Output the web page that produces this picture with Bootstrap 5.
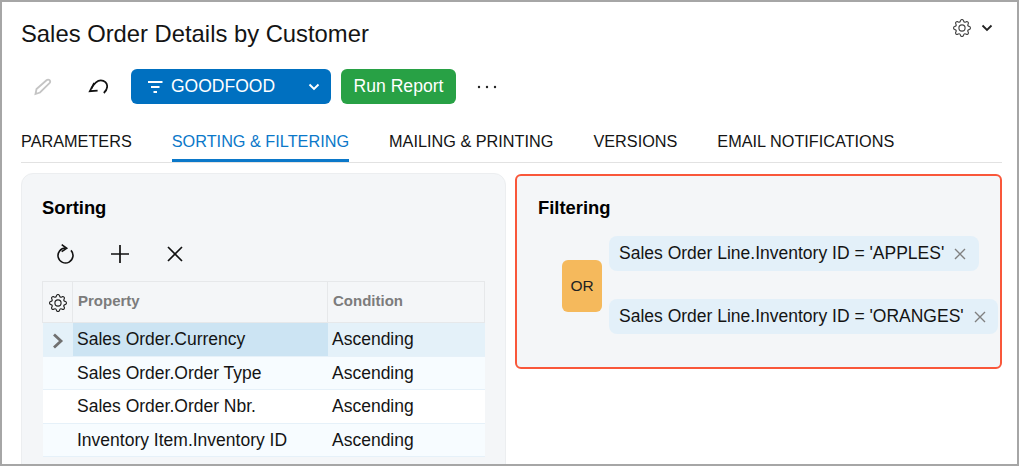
<!DOCTYPE html>
<html lang="en">
<head>
  <meta charset="UTF-8">
  <title>Sales Order Details by Customer</title>
  <link href="https://cdn.jsdelivr.net/npm/bootstrap@5.3.0/dist/css/bootstrap.min.css" rel="stylesheet">
  <style>
    html, body { height: 100%; overflow: hidden; }
    body { font-family: "Liberation Sans", Arial, sans-serif; font-size: 17.5px; color: #141414; background: #fff; }
    .frame { height: 466px; border: 2px solid #a6a6a6; padding: 0 15px 0 19px; overflow: hidden; }
    .title-row { height: 67px; }
    .page-title { font-size: 23.8px; font-weight: 400; margin: 21px 0 0; line-height: 22px; }
    .top-tools { margin: 17px 9px 0 0; gap: 10px; }
    .action-row { height: 35px; }
    .tool-btn { width: 24px; height: 24px; padding: 0; border: 0; background: none; display: flex; align-items: center; justify-content: center; color: #141414; flex: none; }
    .btn-edit { margin-left: 9px; }
    .btn-undo { margin-left: 32px; }
    .btn-template { background: #0070c0; color: #fff; border-radius: 6px; height: 35px; width: 200px; font-size: 17.5px; padding: 0 11px 0 17px; margin-left: 21px; }
    .btn-run { background: #28a145; color: #fff; border-radius: 6px; height: 35px; width: 115px; font-size: 17.6px; padding: 0; border: 0; margin-left: 10px; }
    .btn-more { margin-left: 19px; }
    .tab-row { margin-top: 17px; height: 42px; border-bottom: 1px solid #e2e2e2; gap: 40px; }
    .tab-item { color: #141414; font-size: 16.25px; line-height: 20px; padding-top: 10px; height: 41px; border-bottom: 3px solid transparent; text-decoration: none; white-space: nowrap; }
    .tab-item.on { color: #0b78c9; border-bottom-color: #0b78c9; border-radius: 2px 2px 0 0; }
    .panes { margin-top: 10px; gap: 9px; align-items: flex-start; }
    .sort-pane { width: 485px; height: 320px; background: #f4f6f8; border: 1px solid #eceef0; border-radius: 12px; padding: 23px 20px 0 20px; flex: none; }
    .filter-pane { width: 487px; height: 195px; margin-top: 1px; background: #f4f6f8; border: 2px solid #f9573a; border-radius: 6px; padding: 21px 0 0 21px; flex: none; }
    .pane-title { font-size: 18.4px; font-weight: 700; line-height: 22px; color: #000; margin: 0; }
    .sort-tools { margin: 15px 0 0 11px; height: 40px; gap: 31px; }
    .sort-grid { table-layout: fixed; width: 442px; border-collapse: collapse; margin: 7px 0 0; --bs-table-bg: transparent; }
    .sort-grid th { height: 41px; font-size: 15px; font-weight: 700; color: #7c7c7c; border: 1px solid #e6e8ea; padding: 0 5px 2px; vertical-align: middle; background: #f4f6f8; }
    .sort-grid td { height: 33.5px; padding: 0 4px 0 4.5px; border: 0; border-bottom: 1px solid #e6f1f9; vertical-align: middle; background: #fff; color: #141414; font-size: 17.5px; white-space: nowrap; }
    .sort-grid tr.row-near td { background: #f7fcff; }
    .sort-grid tr.row-active td { background: #e4f1f9; }
    .sort-grid tr.row-active td.cell-active { background: #cce4f3; }
    .filter-body { margin: 17px 0 0 24px; }
    .or-box { width: 40px; height: 52px; background: #f5b95c; border-radius: 6px; font-size: 15.5px; color: #222; flex: none; margin: 1px 7px 0 0; }
    .filter-list { gap: 28px; }
    .filter-chip { height: 35px; background: #e3f0f9; border-radius: 8px; padding: 0 12.5px 0 10px; font-size: 17.5px; gap: 10px; white-space: nowrap; width: max-content; }
    .chip-x { color: #808080; }
  </style>
</head>
<body>
  <svg width="0" height="0" class="position-absolute">
    <symbol id="gear" viewBox="0 0 16 16">
      <path fill="currentColor" d="M8 4.754a3.246 3.246 0 1 0 0 6.492 3.246 3.246 0 0 0 0-6.492zM5.754 8a2.246 2.246 0 1 1 4.492 0 2.246 2.246 0 0 1-4.492 0z"/>
      <path fill="currentColor" d="M9.796 1.343c-.527-1.79-3.065-1.79-3.592 0l-.094.319a.873.873 0 0 1-1.255.52l-.292-.16c-1.64-.892-3.433.902-2.54 2.541l.159.292a.873.873 0 0 1-.52 1.255l-.319.094c-1.79.527-1.79 3.065 0 3.592l.319.094a.873.873 0 0 1 .52 1.255l-.16.292c-.892 1.64.901 3.434 2.541 2.54l.292-.159a.873.873 0 0 1 1.255.52l.094.319c.527 1.79 3.065 1.79 3.592 0l.094-.319a.873.873 0 0 1 1.255-.52l.292.16c1.64.893 3.434-.902 2.54-2.541l-.159-.292a.873.873 0 0 1 .52-1.255l.319-.094c1.79-.527 1.79-3.065 0-3.592l-.319-.094a.873.873 0 0 1-.52-1.255l.16-.292c.893-1.64-.902-3.433-2.541-2.54l-.292.159a.873.873 0 0 1-1.255-.52l-.094-.319zm-2.633.283c.246-.835 1.428-.835 1.674 0l.094.319a1.873 1.873 0 0 0 2.693 1.115l.291-.16c.764-.415 1.6.42 1.184 1.185l-.159.292a1.873 1.873 0 0 0 1.116 2.692l.318.094c.835.246.835 1.428 0 1.674l-.319.094a1.873 1.873 0 0 0-1.115 2.693l.16.291c.415.764-.42 1.6-1.185 1.184l-.291-.159a1.873 1.873 0 0 0-2.693 1.116l-.094.318c-.246.835-1.428.835-1.674 0l-.094-.319a1.873 1.873 0 0 0-2.692-1.115l-.292.16c-.764.415-1.6-.42-1.184-1.185l.159-.291A1.873 1.873 0 0 0 1.945 8.93l-.319-.094c-.835-.246-.835-1.428 0-1.674l.319-.094A1.873 1.873 0 0 0 3.06 4.377l-.16-.292c-.415-.764.42-1.6 1.185-1.184l.292.159a1.873 1.873 0 0 0 2.692-1.115l.094-.319z"/>
    </symbol>
  </svg>

  <div class="frame">
    <div class="title-row d-flex justify-content-between align-items-start">
      <h1 class="page-title">Sales Order Details by Customer</h1>
      <div class="top-tools d-flex align-items-center">
        <svg width="18" height="18" style="color:#444"><use href="#gear"/></svg>
        <svg width="12" height="8" viewBox="0 0 12 8" fill="none" stroke="#222" stroke-width="1.8"><path d="M1.5 1.5 6 6l4.5-4.5"/></svg>
      </div>
    </div>

    <div class="action-row d-flex align-items-center">
      <button class="tool-btn btn-edit" type="button" aria-label="Edit">
        <svg width="20" height="20" viewBox="0 0 20 20" fill="none" stroke="#c4c4c4" stroke-width="1.8"><path d="M3.5 17l1-5L14.5 3.2c1-.9 2.2-.9 3 0s1 2 0 3L8 15.5z"/></svg>
      </button>
      <button class="tool-btn btn-undo" type="button" aria-label="Undo">
        <svg width="20" height="18" viewBox="0 0 20 18" fill="none" stroke="#111" stroke-width="1.7"><path d="M6.2 5 1.8 13.2l7.8-.5"/><path d="M3.4 10.5C6 5.5 9.5 2.3 12.8 2.3c3.8 0 6.4 2.8 6.4 6 0 2.8-1.6 5.2-3.4 6.7"/></svg>
      </button>
      <div class="btn-template d-flex align-items-center">
        <svg width="15" height="14" viewBox="0 0 15 14" fill="none" stroke="#fff" stroke-width="1.9" class="me-2"><path d="M0 2h14.5M3 7h8.5M5.5 12h3.5"/></svg>
        <span class="flex-grow-1">GOODFOOD</span>
        <svg width="12" height="8" viewBox="0 0 12 8" fill="none" stroke="#fff" stroke-width="1.9"><path d="M1.5 1.5 6 6l4.5-4.5"/></svg>
      </div>
      <button class="btn-run" type="button">Run Report</button>
      <button class="tool-btn btn-more" type="button" aria-label="More">
        <svg width="20" height="4" viewBox="0 0 20 4" fill="#222"><circle cx="2" cy="2" r="1.2"/><circle cx="10" cy="2" r="1.2"/><circle cx="18" cy="2" r="1.2"/></svg>
      </button>
    </div>

    <div class="tab-row d-flex">
      <a class="tab-item" href="#">PARAMETERS</a>
      <a class="tab-item on" href="#">SORTING &amp; FILTERING</a>
      <a class="tab-item" href="#">MAILING &amp; PRINTING</a>
      <a class="tab-item" href="#">VERSIONS</a>
      <a class="tab-item" href="#">EMAIL NOTIFICATIONS</a>
    </div>

    <div class="panes d-flex">
      <section class="sort-pane">
        <h2 class="pane-title">Sorting</h2>
        <div class="sort-tools d-flex align-items-center">
          <svg width="24" height="24" viewBox="0 0 24 24" fill="none" stroke="#111" stroke-width="1.6"><path d="M12.5 6A7.5 7.5 0 1 0 18 8.4"/><path d="M8.7 2.7l5 3.6-5 3.3"/></svg>
          <svg width="24" height="24" viewBox="0 0 24 24" fill="none" stroke="#111" stroke-width="1.7"><path d="M3 12h18M12 3v18"/></svg>
          <svg width="24" height="24" viewBox="0 0 24 24" fill="none" stroke="#111" stroke-width="1.7"><path d="M5 5l14 14M19 5 5 19"/></svg>
        </div>
        <table class="table sort-grid mb-0">
          <colgroup><col style="width:30px"><col style="width:255px"><col style="width:157px"></colgroup>
          <thead>
            <tr>
              <th class="text-center p-0"><svg width="18" height="18" style="color:#222"><use href="#gear"/></svg></th>
              <th>Property</th>
              <th>Condition</th>
            </tr>
          </thead>
          <tbody>
            <tr class="row-active">
              <td class="text-center p-0"><svg width="12" height="18" viewBox="0 0 12 18" fill="none" stroke="#707070" stroke-width="2.8"><path d="M2 2.5l7 6.5-7 6.5"/></svg></td>
              <td class="cell-active">Sales Order.Currency</td>
              <td>Ascending</td>
            </tr>
            <tr class="row-near"><td></td><td>Sales Order.Order Type</td><td>Ascending</td></tr>
            <tr><td></td><td>Sales Order.Order Nbr.</td><td>Ascending</td></tr>
            <tr class="row-near"><td></td><td>Inventory Item.Inventory ID</td><td>Ascending</td></tr>
          </tbody>
        </table>
      </section>

      <section class="filter-pane">
        <h2 class="pane-title">Filtering</h2>
        <div class="filter-body d-flex align-items-center">
          <div class="or-box d-flex align-items-center justify-content-center">OR</div>
          <div class="filter-list d-flex flex-column">
            <div class="filter-chip d-flex align-items-center">
              <span>Sales Order Line.Inventory ID = 'APPLES'</span>
              <svg class="chip-x" width="12" height="12" viewBox="0 0 12 12" fill="none" stroke="currentColor" stroke-width="1.4"><path d="M1 1l10 10M11 1 1 11"/></svg>
            </div>
            <div class="filter-chip d-flex align-items-center">
              <span>Sales Order Line.Inventory ID = 'ORANGES'</span>
              <svg class="chip-x" width="12" height="12" viewBox="0 0 12 12" fill="none" stroke="currentColor" stroke-width="1.4"><path d="M1 1l10 10M11 1 1 11"/></svg>
            </div>
          </div>
        </div>
      </section>
    </div>
  </div>

  <script src="https://cdn.jsdelivr.net/npm/bootstrap@5.3.0/dist/js/bootstrap.bundle.min.js"></script>
</body>
</html>
